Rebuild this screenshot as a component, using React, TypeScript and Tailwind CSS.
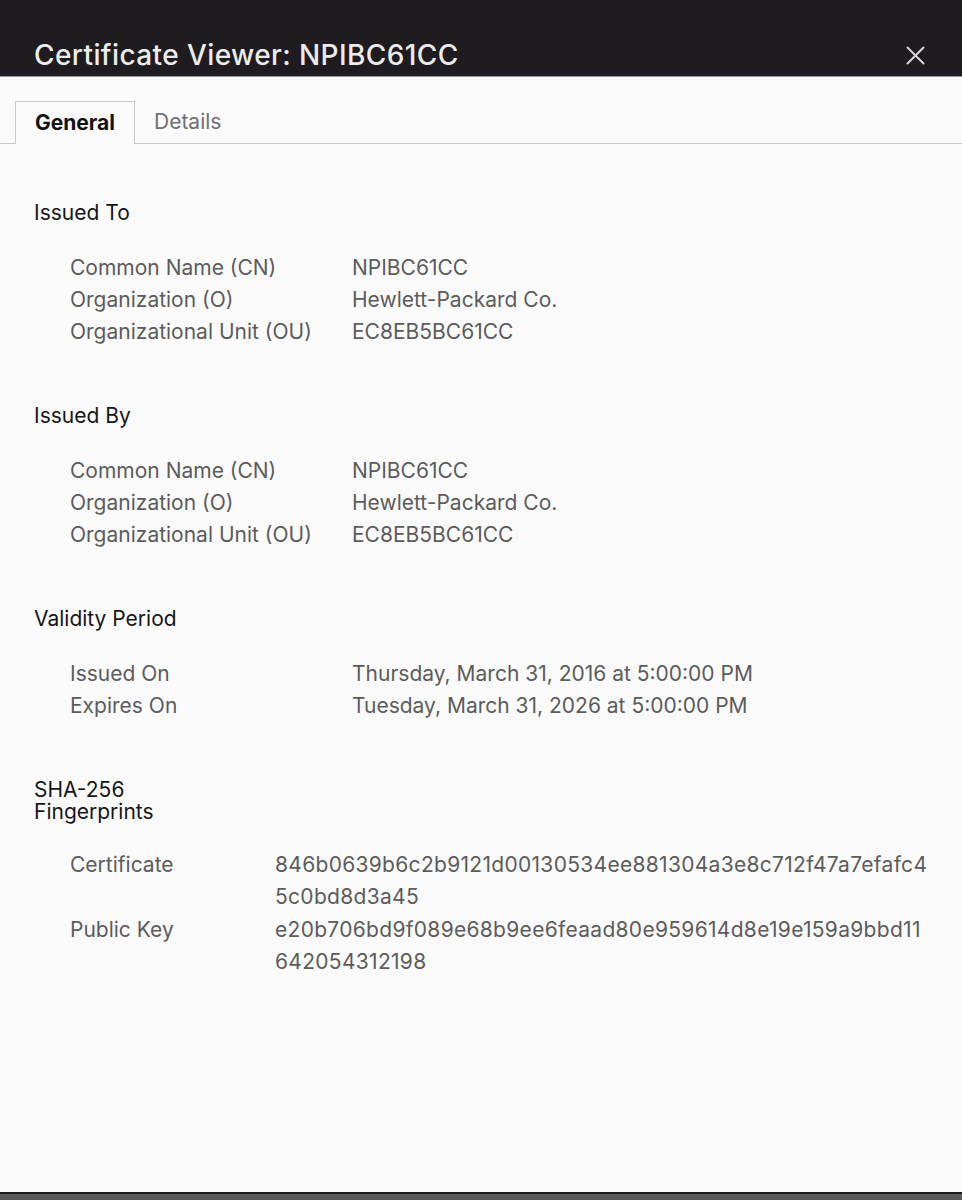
import React from "react";

const font = { fontFamily: "Inter, 'Noto Sans', 'Liberation Sans', sans-serif" };

function Row({ label, value, labelW, valueCls = "" }: { label: string; value: React.ReactNode; labelW: string; valueCls?: string }) {
  return (
    <div className="flex text-[21px] leading-[32px] text-[#5c5c5c]">
      <div className={labelW}>{label}</div>
      <div className={valueCls}>{value}</div>
    </div>
  );
}

function Section({ title, children, bodyCls = "mt-[27px]" }: { title: React.ReactNode; children: React.ReactNode; bodyCls?: string }) {
  return (
    <div>
      <div className="text-[21px] leading-[22px] text-[#161616] pb-[1px]">{title}</div>
      <div className={"pl-[36px] " + bodyCls}>{children}</div>
    </div>
  );
}

export default function App() {
  return (
    <div className="h-[1200px] flex flex-col bg-[#fafafa]" style={font}>
      <div className="h-[77px] bg-[#1e1c20] border-b border-[#9a9a9a] flex items-center justify-between pl-[34px] pr-[37px] pt-[38px] pb-[4px] shrink-0">
        <div className="text-[28px] leading-[32px] text-[#ececec] font-medium tracking-[0.4px]">Certificate Viewer: NPIBC61CC</div>
        <svg width="19" height="19" viewBox="0 0 19 19">
          <path d="M1.5 1.5 L17.5 17.5 M17.5 1.5 L1.5 17.5" stroke="#d6d6d6" strokeWidth="2" strokeLinecap="round" />
        </svg>
      </div>
      <div className="flex-1 flex flex-col">
        <div className="mt-[24px] flex items-end border-b border-[#c9c9c9] pl-[15px] h-[43px]">
          <div className="h-[43px] w-[120px] border border-b-0 border-[#c9c9c9] bg-[#fafafa] mb-[-1px] flex items-center justify-center text-[21px] font-bold text-[#111]">
            General
          </div>
          <div className="h-[42px] flex items-center pl-[19px] text-[21px] text-[#707070]">Details</div>
        </div>
        <div className="pl-[34px] pt-[58px] flex flex-col gap-[57px]">
          <Section title="Issued To">
            <Row labelW="w-[282px]" label="Common Name (CN)" value="NPIBC61CC" />
            <Row labelW="w-[282px]" label="Organization (O)" value="Hewlett-Packard Co." />
            <Row labelW="w-[282px]" label="Organizational Unit (OU)" value="EC8EB5BC61CC" />
          </Section>
          <Section title="Issued By">
            <Row labelW="w-[282px]" label="Common Name (CN)" value="NPIBC61CC" />
            <Row labelW="w-[282px]" label="Organization (O)" value="Hewlett-Packard Co." />
            <Row labelW="w-[282px]" label="Organizational Unit (OU)" value="EC8EB5BC61CC" />
          </Section>
          <Section title="Validity Period">
            <Row labelW="w-[282px]" label="Issued On" value="Thursday, March 31, 2016 at 5:00:00 PM" />
            <Row labelW="w-[282px]" label="Expires On" value="Tuesday, March 31, 2026 at 5:00:00 PM" />
          </Section>
          <Section title={<>SHA-256<br />Fingerprints</>} bodyCls="mt-[25px]">
            <div className="flex flex-col gap-[1px]">
              <Row
                labelW="w-[205px]"
                valueCls="tracking-[0.3px]"
                label="Certificate"
                value={<>846b0639b6c2b9121d00130534ee881304a3e8c712f47a7efafc4<br />5c0bd8d3a45</>}
              />
              <Row
                labelW="w-[205px]"
                valueCls="tracking-[0.3px]"
                label="Public Key"
                value={<>e20b706bd9f089e68b9ee6feaad80e959614d8e19e159a9bbd11<br />642054312198</>}
              />
            </div>
          </Section>
        </div>
      </div>
      <div className="h-[8px] shrink-0 border-t-2 border-[#1a1a1a] bg-[#5a5a5a]" />
    </div>
  );
}
